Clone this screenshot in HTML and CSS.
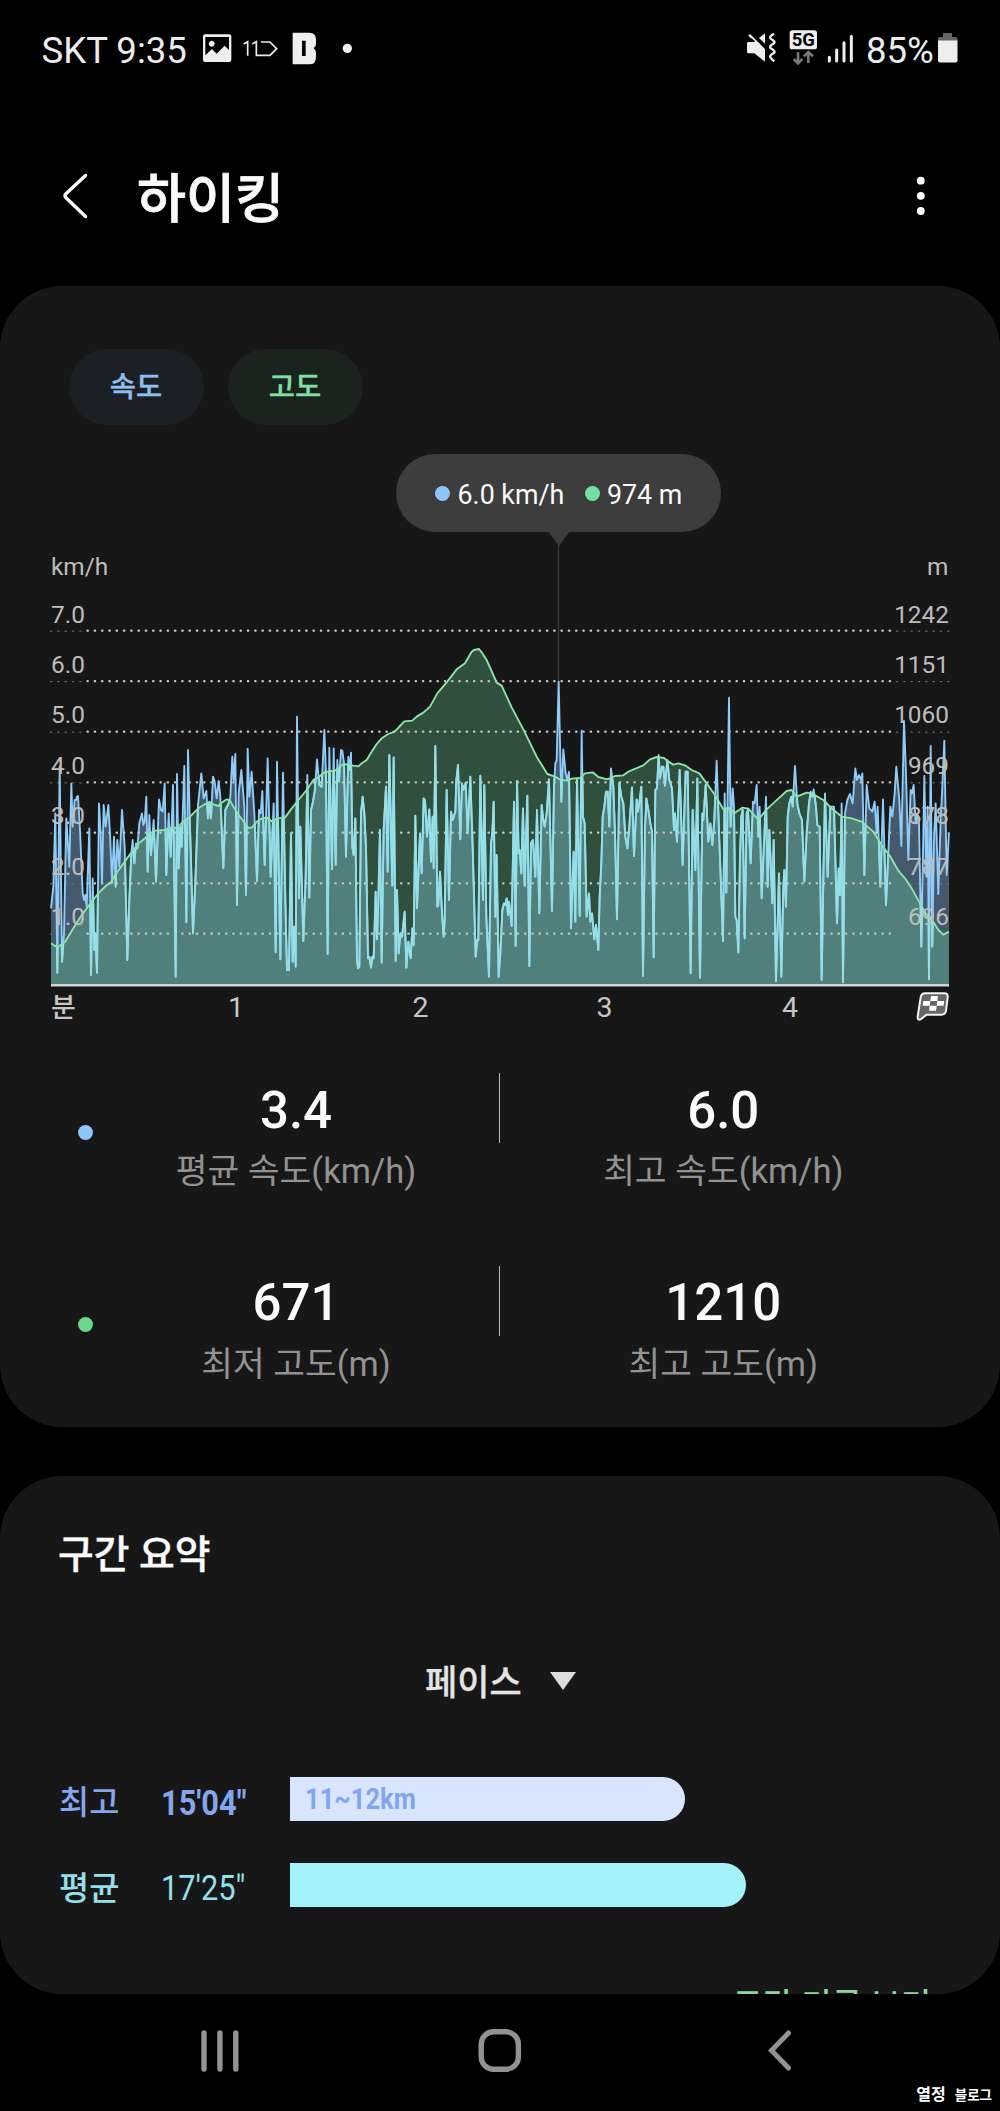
FILE: index.html
```html
<!DOCTYPE html>
<html lang="ko">
<head>
<meta charset="utf-8">
<title>하이킹</title>
<link rel="stylesheet" href="styles.css">
</head>
<body>
<div class="screen">
  <header class="status">
    <span class="status-text carrier">SKT 9:35</span>
    <svg class="status-left" viewBox="200 0 160 100">
      <g transform="scale(.33333)" fill="#eee">
        <path fill-rule="evenodd" d="M615 103h73q6 0 6 6v71q0 6-6 6h-73q-6 0-6-6v-71q0-6 6-6zM616 111v55l20-19 14 14 24-24 13 13v-39zM635 122a9 9 0 1 0 .1 0z"/>
        <path d="M731 132l12-7v42M757 132l12-7v41h41l20-20-20-20h-27" fill="none" stroke="#eee" stroke-width="5"/>
        <path fill-rule="evenodd" d="M878 98h50q20 0 20 22v12q0 8-7 13q7 5 7 13v12q0 23-20 23h-50zM906 122v46h11v-46z"/>
        <circle cx="1042" cy="145" r="14"/>
      </g>
    </svg>
    <span class="grow"></span>
    <svg class="status-right" viewBox="740 0 126 100">
      <g transform="translate(500 0) scale(.33333)" fill="#eee">
        <path d="M741 130q0-4 5-4h16l4-2-21-16q0-5 6-5l44 44v38l-32-25h-17q-5 0-5-5zM795 100v31l-18-17z"/>
        <path d="M822 101q-16 9-10 15 18 10 8 15-14 8-8 14 18 10 8 15-14 8-8 13 2 5 11 11" fill="none" stroke="#eee" stroke-width="7"/>
        <rect x="869" y="91" width="82" height="57" rx="8"/>
        <path d="M894 157v28M881 177l13 13 13-13M925 189v-31M912 169l13-13 14 13" fill="none" stroke="#777" stroke-width="8"/>
        <path d="M988 172v11M1010 150v33M1032 128v55M1054 109v74" fill="none" stroke="#eee" stroke-width="9" stroke-linecap="round"/>
      </g>
      <text x="803.3" y="46.3" class="net">5G</text>
    </svg>
    <span class="status-text level">85%</span>
    <svg class="battery" viewBox="934 0 26 100">
      <path d="M938 41v-2q0-2 2-2h3v-4h9v4h3.500q2 0 2 2v2z" fill="#666"/>
      <path d="M938 40.500h19.500v20q0 2-2 2h-15.500q-2 0-2-2z" fill="#eee"/>
    </svg>
  </header>

  <div class="titlebar">
    <svg class="back" viewBox="60 150 32 90"><path d="M85.500 175.500L66 193.800q-2 2 0 4L85.500 216.500" fill="none" stroke="#fafafa" stroke-width="3.400" stroke-linecap="round"/></svg>
    <h1>하이킹</h1>
    <span class="grow"></span>
    <svg class="more" viewBox="910 150 22 90" fill="#fff"><circle cx="920.800" cy="180.700" r="3.900"/><circle cx="920.800" cy="195.800" r="3.900"/><circle cx="920.800" cy="211" r="3.900"/></svg>
  </div>

  <section class="card chart-card">
    <div class="chips">
      <span class="chip speed">속도</span>
      <span class="chip alt">고도</span>
    </div>
    <div class="chart">
      <svg class="plot" viewBox="0 425 1000 615">
        <path d="M558.500 545V684" stroke="#3b3b3b" stroke-width="1.300"/>
        <g transform="translate(40 600) scale(.33333)">
          <defs><clipPath id="under"><path id="clipArea"/></clipPath></defs>
          <path id="speedArea" fill="#8dc5f9" fill-opacity=".38"/>
          <path id="altArea" fill="#73e2a0" fill-opacity=".28"/>
          <g id="grid"></g>
          <path id="speedLine" class="line" stroke="#90ccf8"/>
          <path id="speedUnder" class="line" stroke="#95dfe7" clip-path="url(#under)"/>
          <path id="altLine" class="line" stroke="#8be6a8"/>
        </g>
        <path d="M51 985.300H949" stroke="#cfd6d4" stroke-width="2.400"/>
        <g class="axis">
          <text x="51" y="575">km/h</text>
          <text x="51" y="623.300">7.0</text><text x="51" y="673.300">6.0</text><text x="51" y="723.300">5.0</text><text x="51" y="774">4.0</text><text x="51" y="824">3.0</text><text x="51" y="874.600">2.0</text><text x="51" y="925">1.0</text>
        </g>
        <g class="axis end">
          <text x="948.500" y="575">m</text>
          <text x="949" y="623.300">1242</text><text x="949" y="673.300">1151</text><text x="949" y="723.300">1060</text><text x="949" y="774">969</text><text x="949" y="824">878</text><text x="949" y="874.600">787</text><text x="949" y="925">696</text>
        </g>
        <g class="ticks">
          <text x="63.500" y="1017" class="unit">분</text><text x="236" y="1017.300">1</text><text x="420.500" y="1017.300">2</text><text x="604.500" y="1017.300">3</text><text x="790" y="1017.300">4</text>
        </g>
        <g transform="translate(660 540) scale(.33333)">
          <path d="M795 1360h58q12 0 10 12l-5 40q-2 12-14 12h-44l-18 14q-10 4-9-8l9-58q2-12 13-12z" fill="#666" stroke="#f4f4f4" stroke-width="6"/>
          <path d="M813 1368h21l-2 15h-21zM790 1383h21l-2 14h-21zM832 1383h21l-2 14h-21zM809 1397h21l-2 15h-21z" fill="#fff"/>
        </g>
      </svg>
      <div class="tooltip">
        <i class="dot blue"></i><span class="tip-speed">6.0 km/h</span>
        <i class="dot green"></i><span>974 m</span>
      </div>
    </div>
    <div class="stats">
      <i class="dot blue"></i>
      <div class="stat"><b>3.4</b><span>평균 속도(km/h)</span></div>
      <i class="rule"></i>
      <div class="stat"><b>6.0</b><span>최고 속도(km/h)</span></div>
    </div>
    <div class="stats">
      <i class="dot green deep"></i>
      <div class="stat"><b>671</b><span>최저 고도(m)</span></div>
      <i class="rule"></i>
      <div class="stat"><b>1210</b><span>최고 고도(m)</span></div>
    </div>
  </section>

  <section class="card summary">
    <h2>구간 요약</h2>
    <div class="picker"><span>페이스</span><svg viewBox="0 0 26 18"><path d="M0 0h26L13 18z" fill="#dcdcdc"/></svg></div>
    <div class="pace best"><span class="name">최고</span><span class="time"><em>15'04"</em></span><span class="bar" style="width:394.500px"><em>11~12km</em></span></div>
    <div class="pace avg"><span class="name">평균</span><span class="time"><em>17'25"</em></span><span class="bar" style="width:456px"></span></div>
    <a class="link">구간 기록 보기</a>
  </section>

  <nav class="nav">
    <svg viewBox="190 1994 60 117"><path d="M204 2033v36M219.900 2033v36M235.800 2033v36" stroke="#929292" stroke-width="5.400" stroke-linecap="round"/></svg>
    <svg viewBox="470 1994 60 117"><rect x="481.200" y="2031.800" width="37.200" height="37.500" rx="12.500" fill="none" stroke="#929292" stroke-width="5.400"/></svg>
    <svg viewBox="750 1994 60 117"><path d="M788.500 2033L771.500 2050.500L788.500 2068" fill="none" stroke="#929292" stroke-width="5" stroke-linecap="round"/></svg>
  </nav>
  <div class="sign"><span>열정</span><span>블로그</span></div>
</div>
<script src="chart.js"></script>
</body>
</html>
```
FILE: styles.css
```css
* { box-sizing: border-box; }
body { margin: 0; background: #000; }
.screen {
  position: relative;
  width: 1000px;
  height: 2111px;
  overflow: hidden;
  color: #fafafa;
  font-family: Roboto, "Noto Sans CJK KR", sans-serif;
}
svg { display: block; flex: none; }
em, i { font-style: normal; }
.grow { flex: 1; }

.status { display: flex; align-items: center; height: 102px; margin-bottom: -2px; padding: 0 40px 0 41.500px; }
.status-text { flex: none; font-size: 36.600px; line-height: 42px; color: #ececec; white-space: nowrap; }
.carrier { width: 158.500px; }
.level { width: 68px; }
.status-left, .status-right, .battery { height: 100px; align-self: flex-start; }
.status-left { width: 160px; }
.status-right { width: 126px; }
.battery { width: 26px; }
.net { font-size: 18.500px; font-weight: 700; fill: #000; text-anchor: middle; }

.titlebar { display: flex; height: 186px; padding: 50px 68px 0 60px; }
.back { width: 32px; height: 90px; }
.more { width: 22px; height: 90px; }
h1 { margin: 5px 0 0 45px; font-size: 53.300px; line-height: 90px; font-weight: 500; -webkit-text-stroke: .8px currentColor; }

.card { background: #171717; border-radius: 62px; overflow: hidden; }
.chart-card { height: 1140.500px; padding-top: 63px; }
.chips { display: flex; gap: 24px; padding-left: 68.500px; }
.chip {
  width: 135px;
  height: 76px;
  border-radius: 38px;
  font-size: 28.500px;
  line-height: 78px;
  font-weight: 500;
  text-align: center;
  -webkit-text-stroke: .3px currentColor;
}
.chip.speed { background: #1c2024; color: #8fbff2; }
.chip.alt { background: #1b231e; color: #7fdfa5; }

.chart { position: relative; height: 615px; }
.plot { width: 1000px; height: 615px; }
.line { fill: none; stroke-width: 5.600; stroke-linejoin: round; }
.axis { font-size: 24.400px; fill: #bdbdbd; }
.axis.end { text-anchor: end; }
.ticks { font-size: 28.500px; fill: #c6c6c6; text-anchor: middle; }
.ticks .unit { font-size: 27px; font-weight: 500; }

.tooltip {
  position: absolute;
  left: 395.500px;
  top: 28.500px;
  width: 325.500px;
  height: 78px;
  padding: 2px 0 0 39.500px;
  display: flex;
  align-items: center;
  border-radius: 39px;
  background: #3d3d3d;
  font-size: 26.800px;
  white-space: nowrap;
}
.tooltip span { padding-top: 3px; }
.tooltip::after {
  content: "";
  position: absolute;
  left: 152px;
  top: 77.500px;
  border: 11px solid transparent;
  border-top: 15px solid #3d3d3d;
  border-bottom: 0;
}
.dot { flex: none; width: 15px; height: 15px; border-radius: 50%; margin-right: 7.500px; }
.blue { background: #8dc5f9; }
.green { background: #73e2a0; }
.green.deep { background: #69d888; }
.tip-speed { width: 127px; }

.stats { display: grid; grid-template-columns: 93px 406px 1.300px 446px; height: 192.700px; }
.stats .dot { margin: 84.500px 0 0 77.500px; }
.rule { height: 70px; margin-top: 33px; background: #b8b8b8; }
.stat { display: flex; flex-direction: column; align-items: center; padding-top: 40.500px; }
.stat b { font-size: 51px; line-height: 60px; font-weight: 500; }
.stat span { margin-top: 8.500px; font-size: 34.500px; line-height: 44px; color: #929292; }

.summary { height: 518.500px; margin-top: 49px; padding-top: 50px; }
h2 { margin: 0 0 0 58px; font-size: 38.800px; line-height: 58px; font-weight: 500; -webkit-text-stroke: .4px currentColor; }
.picker { display: flex; align-items: center; height: 60px; margin: 69px 0 0 425px; font-size: 35px; font-weight: 500; color: #e4e4e4; -webkit-text-stroke: .3px currentColor; }
.picker span { padding-bottom: 6px; }
.picker svg { width: 26px; height: 18px; margin: 0 0 4px 28px; }
.pace { display: flex; align-items: center; height: 44px; padding-left: 59px; }
.best { margin-top: 64.500px; color: #84a6ee; }
.avg { margin-top: 41.500px; color: #93e0ea; }
.name { width: 102px; font-size: 32.800px; line-height: 44px; font-weight: 500; padding-top: 8px; }
.time { width: 129px; font-size: 35px; padding-top: 8px; }
.time em, .bar em { display: inline-block; transform: scaleX(.88); transform-origin: 0 50%; white-space: nowrap; }
.best .time { font-weight: 700; }
.bar { height: 44px; border-radius: 0 22px 22px 0; padding-left: 15px; font-size: 29px; line-height: 45px; font-weight: 700; }
.best .bar { background: #d9e4fd; color: #80a6f0; }
.avg .bar { background: #a4f2f9; }
.link { display: block; margin: 77px 69px 0 0; text-align: right; font-size: 33px; line-height: 44px; font-weight: 500; color: #8cd6a2; }

.nav { display: flex; justify-content: space-around; height: 117px; padding: 0 80px; }
.nav svg { width: 60px; height: 117px; }
.sign {
  position: absolute;
  right: 8px;
  bottom: 5px;
  display: flex;
  gap: 9px;
  font-size: 16px;
  line-height: 22px;
  font-weight: 700;
  color: #fff;
}
.sign span:last-child { font-size: 13.500px; }
```
FILE: chart.js
```js
// Samples are [x, y] pairs in thirds of a pixel; each section carries its own origin.
const speedSections = [
  { dx: 0, dy: 0, pts: "33,925 40,860 46,640 52,1118 59,500 66,1085 72,1000 79,655 88,800 94,550 98,680 104,600 108,600 111,590 114,588 120,690 128,880 132,900 136,885 140,920 148,685 153,1125 158,835 163,1050 166,1000 171,1118 177,610 182,700 186,850 191,615 197,680 205,615 210,700 216,848 222,710 227,860 232,720 238,800 246,630 254,740 262,1080 268,900 274,760 278,720 283,790 288,730 292,745 298,670 306,640 310,675 314,665 319,590 323,815 328,645 333,765 341,660 348,845 357,598 363,630 368,635 374,550 379,825 386,640 392,770 399,555 407,1130 411,522 416,805 421,680 425,740 433,498 439,967 444,450 450,680 459,1000 466,850 474,615 484,520 491,595 499,573 504,655 508,605 513,655 519,530 524,545 530,595 536,543 541,590 550,805 556,630 566,610 571,590 577,470 581,540 586,462 591,915 596,580 604,510 613,620 618,885 623,446 628,590 635,515 643,640 651,843 657,630 662,640 667,573 674,795 683,475 692,830 701,610 707,1057 711,485 721,1078 729,518 736,900 741,1110 747,1110 753,700 758,1085 762,980 767,1100 771,350 777,895 781,680 790,1023 797,830 802,525 808,893 813,630 818,610 824,575 831,478 838,555 845,560 853,390 858,520 863,1062 868,443 876,808 881,445 887,795 892,480 897,545 903,450 907,452 912,490 918,770 925,470 930,510 933,458 937,740 941,765 946,655 951,1080" },
  { dx: 930, dy: 0, pts: "24,1105 28,1100 33,640 38,590 43,640 48,740 54,1075 58,1070 63,1103 67,1070 71,1075 77,875 81,1018 85,900 90,690 95,1088 101,690 108,560 113,815 118,465 127,857 131,472 137,1083 141,870 146,1060 151,1000 156,1010 164,935 169,1103 175,1025 180,1060 182,1075 187,985 191,1035 196,647 201,925 210,700 215,820 221,595 225,600 231,710 238,628 243,785 248,650 251,805 256,438 262,920 265,915 270,815 276,940 281,1010 284,960 290,570 297,900 303,635 308,660 316,635 319,540 324,495 331,718 336,550 340,570 347,548 353,700 361,530 368,740 377,1070 382,1020 385,1020 391,527 399,900 403,555 409,950 417,1130 423,730 427,700 431,605 436,950 440,765 446,1130 451,1060 457,930 462,910 466,915 470,895 474,945 477,905 485,978 492,605 497,1038 501,543 506,760 509,750 514,820 519,625 524,857 532,587 538,1098 543,730 549,720 556,830 561,630 568,940 575,615 580,660 584,680 590,640 597,538 606,933 612,560 616,490 620,480 626,245 634,605 640,448 647,520 652,540 657,515 663,985 671,755 676,965 681,540 689,948 695,392 699,650 704,670 710,950 717,880 721,965 726,940 733,1018 738,975 745,1050 749,890 754,790 758,650 763,620 768,575 773,575 778,680 783,505 790,560 795,700 801,958 808,548 814,590 820,610 826,710 832,745 838,680 846,562 852,768 860,598 864,635 869,600 874,560 879,1128 885,690 889,595 895,630 901,670 906,695 911,1072 916,570 921,565 926,465" },
  { dx: 1860, dy: -180, pts: "0,715 6,680 10,680 15,737 22,660 28,720 36,745 42,870 45,820 51,905 59,690 68,975 77,695 83,695 92,1300 98,810 106,990 112,715 120,1313 127,820 130,840 137,735 145,905 151,850 157,915 163,840 170,662 178,900 189,1203 194,760 199,1058 207,473 212,860 218,745 222,800 226,1130 230,1140 235,1237 240,950 244,830 248,810 254,1195 260,820 264,810 272,970 279,785 284,790 290,735 295,890 299,800 305,1075 310,960 318,770 323,1040 328,870 337,1090 341,900 348,1323 353,1150 357,1000 364,1310 370,1040 373,990 378,1100 383,830 388,790 394,770 398,800 405,678 412,790 418,820 426,840 433,1025 440,880 447,790 452,755 457,770 461,748 468,800 472,855 479,860 485,1320 490,1020 495,760 503,1010 511,800 522,800 531,1150 536,985 540,1065 545,790 549,1327 555,820 562,780 570,762 578,790 586,685 591,720 597,705 603,720 607,700 613,1005 620,735 628,805 637,815 644,785 650,880 653,800 661,1040 669,778 678,1095 684,960 691,800 697,830 704,760 709,680 718,780 724,918 732,543 738,700 745,960 752,750 756,760 761,735 767,850 772,820 777,850 784,1220 793,708 799,1010 803,800 807,1318 812,618 817,1220 822,900 827,790 835,1062 842,840 847,740 853,602 860,1005 867,877" }
];
const altSections = [
  { dx: 0, dy: 0, pts: "33,1030 45,1038 55,1040 75,1026 100,985 125,945 150,912 175,880 200,855 212,848 225,825 245,798 265,770 280,750 297,730 315,715 330,700 345,692 375,690 395,683 410,683 430,665 450,650 475,625 495,612 510,607 525,615 535,618 545,608 560,598 570,601 580,620 600,650 625,684 637,682 650,665 662,657 680,652 695,664 712,655 735,653 750,632 775,600 800,570 820,540 840,528 855,516 885,512 910,492 930,495" },
  { dx: 930, dy: 0, pts: "10,497 25,499 35,490 50,480 65,455 80,432 95,415 115,402 135,394 150,378 163,364 187,362 200,350 220,338 240,320 262,280 290,247 320,208 345,190 365,155 372,150 387,147 395,157 410,180 440,248 455,257 485,322 520,388 560,470 592,522 615,530 627,537 650,542 665,536 690,534 705,520 728,517 745,531 772,538 795,528 820,526 835,515 880,496 900,478 920,471" },
  { dx: 1860, dy: -180, pts: "0,652 12,654 25,665 40,674 55,670 75,676 95,690 118,700 140,730 165,765 190,808 205,803 225,818 247,803 265,806 295,839 320,808 345,785 380,753 395,750 410,770 440,758 455,760 490,780 515,805 545,830 575,835 605,845 640,875 665,915 690,948 715,992 735,1015 755,1045 780,1090 800,1125 820,1145 835,1170 850,1184 867,1175" }
];

function toPath(sections) {
  return "M" + sections.flatMap(s => s.pts.split(" ").map(p => {
    const [x, y] = p.split(",").map(Number);
    return (x + s.dx) + " " + (y + s.dy);
  })).join("L");
}
const set = (id, d) => document.getElementById(id).setAttribute("d", d);
const speed = toPath(speedSections);
const alt = toPath(altSections);
const close = "L2727 1153L33 1153Z";
set("speedArea", speed + close);
set("altArea", alt + close);
set("clipArea", alt + close);
set("speedLine", speed);
set("speedUnder", speed);
set("altLine", alt);

// Dotted gridlines: full dots mid-plot, faint dashes beneath the axis labels.
let dots = "";
for (const y of [92, 243.5, 395, 547, 698, 850, 1001]) {
  for (let i = 0; i < 124; i++) {
    const x = 33 + i * 21.88;
    dots += x < 130 || x > 2560
      ? `<rect x="${x - 3}" y="${y}" width="7" height="3" fill="#777"/>`
      : `<rect x="${x - 3}" y="${y - 3.5}" width="7" height="7" rx="2" fill="#c4c9b8"/>`;
  }
}
document.getElementById("grid").innerHTML = dots;
```
